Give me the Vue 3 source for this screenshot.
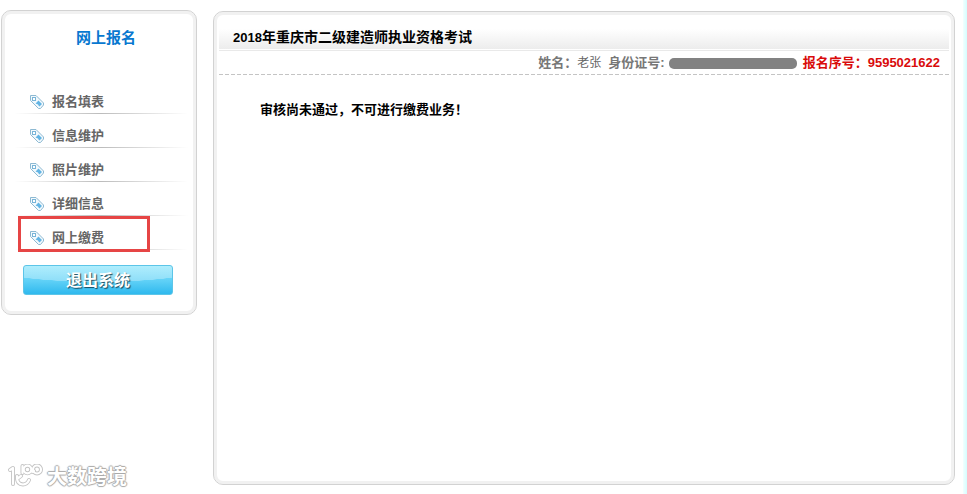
<script setup>
import { ref } from "vue";

const menuItems = ref([
  { id: 1, label: "报名填表" },
  { id: 2, label: "信息维护" },
  { id: 3, label: "照片维护" },
  { id: 4, label: "详细信息" },
  { id: 5, label: "网上缴费" },
]);

const activeItem = ref(5);

const user = ref({
  name: "老张",
  number: "9595021622",
});

function selectItem(id) {
  activeItem.value = id;
}
</script>

<template>
  <div class="page">
    <aside class="panel sidebar">
      <h2 class="sidebarTitle">网上报名</h2>
      <nav>
        <ul class="menu">
          <li v-for="item in menuItems" :key="item.id" class="menuItem">
            <a
              href="#"
              class="menuLink"
              :class="{ active: item.id === activeItem }"
              @click.prevent="selectItem(item.id)"
            >
              <svg class="tag" viewBox="0 0 16 16" width="16" height="16" aria-hidden="true">
                <path d="M1.5 1.5 H7 L14.5 9 V11 L11.5 14.5 H9.5 L1.5 6.5 Z" fill="#f2f9fd" stroke="#8db9d2" stroke-linejoin="round" />
                <path d="M9.5 6.5 L13 10 L10.5 12.5 L9.5 11.5 L9 10.5 L6.5 9.5 Z" fill="#62b4e4" />
                <rect x="3.5" y="3.5" width="3" height="3" fill="#fff" stroke="#79b5d8" />
              </svg>
              <span>{{ item.label }}</span>
            </a>
          </li>
        </ul>
      </nav>
      <button type="button" class="logout">退出系统</button>
    </aside>

    <main class="panel content">
      <h1 class="examTitle"><span class="year">2018</span>年重庆市二级建造师执业资格考试</h1>
      <div class="info">
        <span class="label">姓名：</span>
        <span class="name">{{ user.name }}</span>
        <span class="label idLabel">身份证号:</span>
        <span class="masked"></span>
        <span class="serial">报名序号：{{ user.number }}</span>
      </div>
      <p class="message">审核尚未通过，不可进行缴费业务！</p>
    </main>

    <div class="edge"></div>

    <div class="watermark">
      <svg viewBox="0 0 36 26" width="36" height="26" aria-hidden="true">
        <g fill="none" stroke-linecap="round" stroke-linejoin="round">
          <g stroke="#c4c4c4" stroke-width="4">
            <path d="M3 6 L6 4 V20 M10 12 V14 Q10 20 16 20.5 Q20 20.5 22 16 M10 15 L14 12 M15.5 2 V9" />
            <circle cx="20.5" cy="5.5" r="3.8" />
            <circle cx="30" cy="5.5" r="4" />
            <path d="M24 7 Q25.5 8.5 27 7" />
          </g>
          <g stroke="#fff" stroke-width="2.2">
            <path d="M3 6 L6 4 V20 M10 12 V14 Q10 20 16 20.5 Q20 20.5 22 16 M10 15 L14 12 M15.5 2 V9" />
            <circle cx="20.5" cy="5.5" r="3.8" />
            <circle cx="30" cy="5.5" r="4" />
            <path d="M24 7 Q25.5 8.5 27 7" />
          </g>
        </g>
      </svg>
      <span>大数跨境</span>
    </div>
  </div>
</template>

<style>
body {
  margin: 0;
  background: #fff;
}
</style>

<style scoped>
  .page {
    position: relative;
    display: flex;
    align-items: flex-start;
    gap: 16px;
    box-sizing: border-box;
    min-height: 100vh;
    padding: 10px 12px 9px 1px;
    font-family: "Liberation Sans", "Noto Sans CJK SC", sans-serif;
    font-size: 13px;
    line-height: 20px;
    color: #666;
  }

  .panel {
    box-sizing: border-box;
    border: 1px solid #d2d2d2;
    border-radius: 10px;
    box-shadow: inset 0 0 0 3px #f1f1f1;
    background: #fff;
  }

  .sidebar {
    flex: none;
    width: 196px;
    padding: 17px 8px 19px 12px;
  }

  .sidebarTitle {
    margin: 0 0 32px;
    padding-left: 10px;
    font-size: 15px;
    line-height: 20px;
    text-align: center;
    color: #0878d0;
  }

  .menu {
    margin: 0;
    padding: 0;
    list-style: none;
  }

  .menuItem {
    height: 34px;
    background: linear-gradient(90deg, #fff, #bcbcbc 50%, #fff) bottom / 100% 1px no-repeat;
  }

  .menuLink {
    display: flex;
    align-items: center;
    gap: 7px;
    box-sizing: border-box;
    width: 132px;
    height: 36px;
    margin-left: 4px;
    padding: 8px 8px 0;
    border: 3px solid transparent;
    font-weight: bold;
    color: #666;
    text-decoration: none;
  }

  .menuLink.active {
    border-color: #e64545;
  }

  .tag {
    flex: none;
  }

  .logout {
    display: block;
    width: 150px;
    height: 30px;
    margin: 15px 0 0 9px;
    padding: 2px 0 0;
    border: 1px solid #5cc5e8;
    border-radius: 3px;
    background:
      radial-gradient(ellipse 110px 16px at 50% 0, rgba(255, 255, 255, 0.3) 98%, transparent),
      linear-gradient(#8ce6fc, #5dcff6 55%, #2fb9ee);
    font-family: inherit;
    font-size: 16px;
    font-weight: bold;
    line-height: 26px;
    color: #fff;
    text-shadow: 1px 1px 1px #17495c;
  }

  .content {
    flex: 1;
    align-self: stretch;
    margin-top: 1px;
    padding: 6px 5px;
  }

  .examTitle {
    margin: 0;
    padding: 9px 14px 1px;
    border-bottom: 1px solid #fff;
    box-shadow: 0 1px 0 #e9e9e9;
    background: linear-gradient(#fff 35%, #ececec);
    background-clip: padding-box;
    font-size: 14px;
    line-height: 20px;
    color: #000;
  }

  .year {
    font-size: 13px;
  }

  .info {
    display: flex;
    align-items: center;
    justify-content: flex-end;
    padding: 3px 9px 2px 0;
    background: repeating-linear-gradient(90deg, #c4c4c4 0 4px, #fff 4px 6px) bottom / 100% 1px no-repeat;
  }

  .label {
    font-weight: bold;
    color: #777;
  }

  .name {
    font-size: 12px;
  }

  .idLabel {
    margin-left: 7px;
  }

  .masked {
    width: 128px;
    height: 11px;
    margin: 0 6px 0 4px;
    border-radius: 5px;
    background: #828282;
  }

  .serial {
    font-weight: bold;
    color: #d90b0b;
  }

  .message {
    margin: 25px 0 0 41px;
    font-weight: bold;
    color: #000;
  }

  .edge {
    position: absolute;
    top: 0;
    right: 0;
    bottom: 0;
    width: 4px;
    background: linear-gradient(90deg, #f2ffff, #d5fdff);
  }

  .watermark {
    position: absolute;
    left: 7px;
    bottom: 4px;
    display: flex;
    align-items: center;
    gap: 4px;
    font-size: 20px;
    font-weight: bold;
    line-height: 26px;
    color: #fff;
    text-shadow: 1px 0 1px #aaa, -1px 0 1px #aaa, 0 1px 1px #aaa, 0 -1px 1px #aaa;
  }
</style>
